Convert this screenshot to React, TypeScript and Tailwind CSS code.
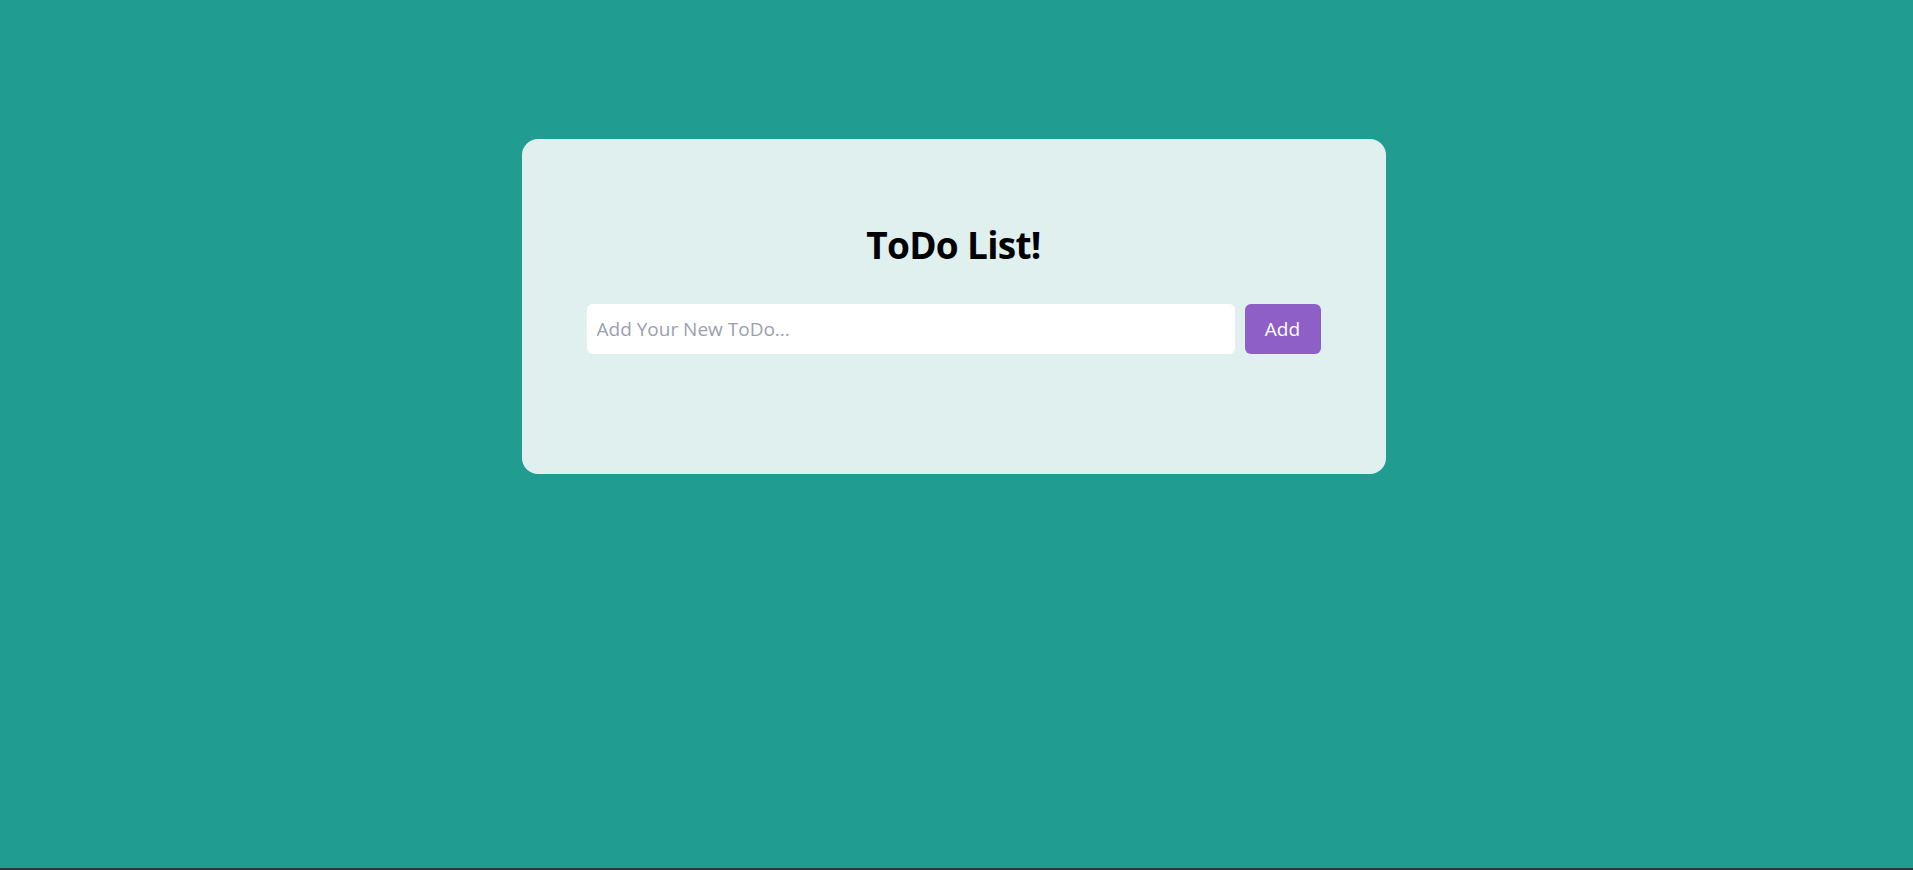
import React, { useState } from 'react';

const App: React.FC = () => {
  const [todo, setTodo] = useState('');

  return (
    <div
      className="h-screen box-border bg-[#209c90] border-b-2 border-[#2c3836] pt-[139px]"
      style={{ fontFamily: '"Open Sans", "Noto Sans", sans-serif' }}
    >
      <div className="mx-auto w-[864px] translate-x-[-3px] rounded-2xl bg-[#e0f0ee] px-[65px] pt-[82px] pb-[120px]">
        <h1 className="text-center text-[37px] leading-[48px] font-bold text-black tracking-[-0.7px]">
          ToDo List!
        </h1>
        <div className="mt-[35px] flex gap-[10px]">
          <input
            value={todo}
            onChange={(e) => setTodo(e.target.value)}
            placeholder="Add Your New ToDo..."
            className="h-[50px] flex-1 rounded-md bg-white px-[10px] text-[19px] text-gray-800 outline-none placeholder:text-[#9aa0b0]"
          />
          <button className="h-[50px] w-[76px] rounded-md bg-[#8e5fc6] text-[19px] text-white">
            Add
          </button>
        </div>
      </div>
    </div>
  );
};

export default App;
